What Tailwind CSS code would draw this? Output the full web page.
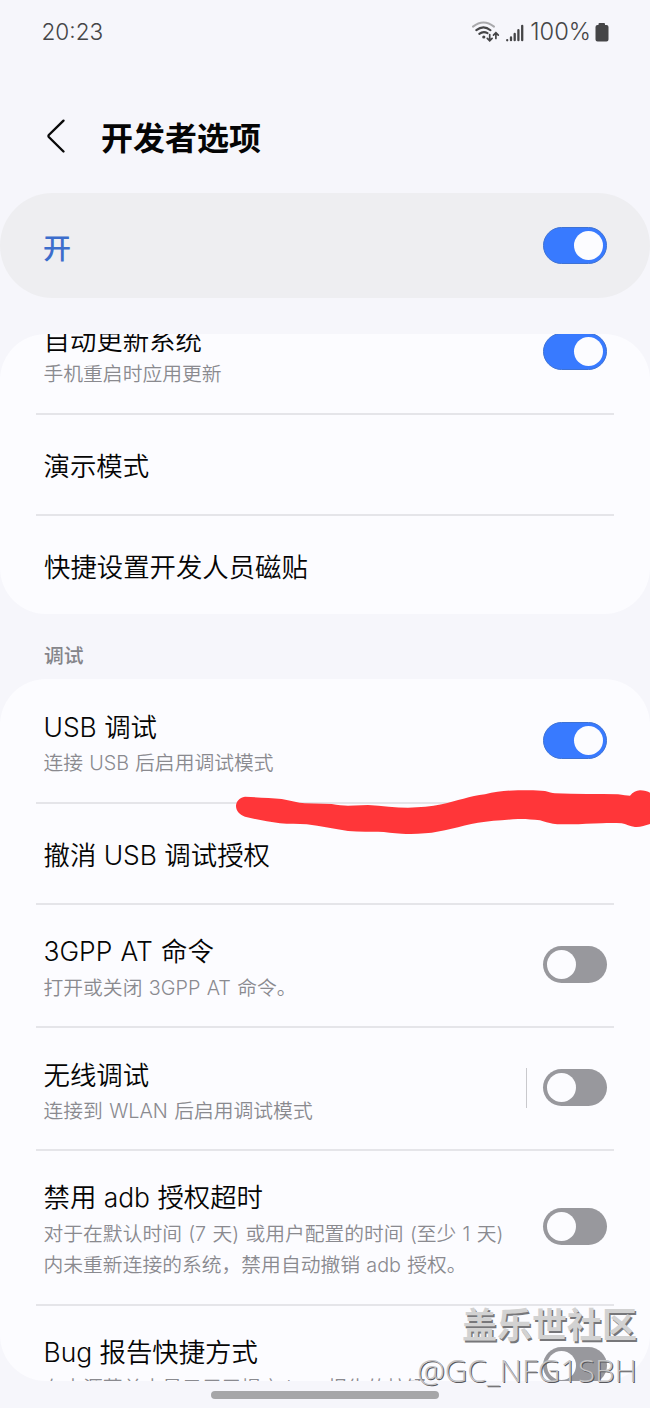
<!DOCTYPE html>
<html lang="zh-CN">
<head>
<meta charset="utf-8">
<title>开发者选项</title>
<script src="https://cdn.jsdelivr.net/npm/@tailwindcss/browser@4"></script>
</head>
<body class="bg-[#f6f6fb]">
<div class="relative flex h-[1408px] w-[650px] flex-col overflow-hidden bg-[#f6f6fb] font-['Inter','Noto_Sans_CJK_SC',sans-serif] text-[26.4px] font-[360] leading-[36px] text-[#050505]">

  <!-- status bar -->
  <header class="flex h-16 shrink-0 items-center justify-between pl-[41.500px] pr-[41px] text-[#454547]">
    <span class="font-['Inter'] text-[22.6px] font-[350]">20:23</span>
    <div class="flex items-center">
      <svg class="h-[24px] w-[60px]" viewBox="0 0 60 24" fill="none" stroke="#454547" stroke-linecap="round">
        <path d="M3 6.6Q13.500 -1.500 24 6.600" stroke="#a9a9ac" stroke-width="2"/>
        <path d="M6.300 10.200Q13.500 4.600 20.500 10.200" stroke-width="2.100"/>
        <path d="M9.300 13.900Q13.300 10.800 17.500 13.200" stroke-width="2.100"/>
        <circle cx="13.800" cy="17" r="1.600" fill="#454547" stroke="none"/>
        <path d="M19.700 14.500V20.500M17.300 18.400L19.700 20.800L22.100 18.400M25.900 18.500V12.800M23.500 15.100L25.900 12.700L28.300 15.100" stroke-width="1.700"/>
        <path d="M37.200 20.200V20.300M41 17.500V20.200M44.700 14V20.200M48.400 10.200V20.200M52.200 5.800V20.200" stroke-width="2.300"/>
      </svg>
      <span class="font-['Inter'] text-[23.700px] font-light">100%</span>
      <svg class="ml-[4px] h-[19px] w-[14px]" viewBox="0 0 14 19"><path d="M4.500 0h4.500a1 1 0 0 1 1 1v1h1.500a2 2 0 0 1 2 2v12.500a2 2 0 0 1-2 2h-9a2 2 0 0 1-2-2V4a2 2 0 0 1 2-2h1V1a1 1 0 0 1 1-1z" fill="#454547"/></svg>
    </div>
  </header>

  <!-- page title -->
  <div class="flex h-[129px] shrink-0 items-center pl-[46px] pt-[18px]">
    <svg class="mb-[4px] h-[36px] w-[22px]" viewBox="0 0 22 36" fill="none" stroke="#0a0a0a" stroke-width="2.400" stroke-linecap="round" stroke-linejoin="round"><path d="M17.500 2.700L2.800 17Q2 18 2.800 19L17.500 33.500"/></svg>
    <h1 class="ml-[33px] pt-[2px] text-[32px] font-semibold leading-[48px]">开发者选项</h1>
  </div>

  <!-- master switch -->
  <section class="flex h-[105px] shrink-0 items-center justify-between rounded-full bg-[#eeeef1] pl-[43px] pr-[43px]">
    <span class="pt-[6px] text-[28px] font-medium text-[#3c6dcc]">开</span>
    <div class="flex h-[37px] w-[64px] items-center justify-end rounded-full border border-[#3e72d4] bg-[#387aff] pr-[3px]"><div class="size-[29px] rounded-full bg-[#fcfcff]"></div></div>
  </section>

  <!-- system card -->
  <section class="mt-[36px] flex h-[280px] shrink-0 flex-col overflow-hidden rounded-[46px] bg-[#fcfcff]">
    <div class="flex h-[79px] shrink-0 justify-between pl-[43.500px] pr-[43px]">
      <div class="-mt-[12px]">
        <p>自动更新系统</p>
        <p class="mt-px text-[19.8px] font-[350] leading-[31px] text-[#8a8a8f]">手机重启时应用更新</p>
      </div>
      <div class="-mt-px flex h-[37px] w-[64px] items-center justify-end rounded-full border border-[#3e72d4] bg-[#387aff] pr-[3px]"><div class="size-[29px] rounded-full bg-[#fcfcff]"></div></div>
    </div>
    <div class="mx-[36px] h-[2px] shrink-0 bg-[#e5e5e9]"></div>
    <div class="flex h-[99px] shrink-0 items-center pl-[43.500px] pt-[3px]">演示模式</div>
    <div class="mx-[36px] h-[2px] shrink-0 bg-[#e5e5e9]"></div>
    <div class="flex h-[98px] shrink-0 items-center pl-[44px] pt-[4px]">快捷设置开发人员磁贴</div>
  </section>

  <h2 class="flex h-[65px] shrink-0 items-center pl-[44px] pt-[18px] text-[19.8px] font-medium text-[#85858a]">调试</h2>

  <!-- debugging card -->
  <section class="flex h-[702px] shrink-0 flex-col overflow-hidden rounded-[46px] bg-[#fcfcff]">
    <div class="flex h-[123px] shrink-0 items-start justify-between pl-[43.500px] pr-[43px]">
      <div class="pt-[30px]">
        <p>USB 调试</p>
        <p class="mt-[3px] text-[19.8px] font-[350] leading-[31px] text-[#8a8a8f] [word-spacing:0.5px]">连接 USB 后启用调试模式</p>
      </div>
      <div class="mt-[43px] flex h-[37px] w-[64px] items-center justify-end rounded-full border border-[#3e72d4] bg-[#387aff] pr-[3px]"><div class="size-[29px] rounded-full bg-[#fcfcff]"></div></div>
    </div>
    <div class="mx-[36px] h-[2px] shrink-0 bg-[#e5e5e9]"></div>
    <div class="flex h-[99px] shrink-0 items-center pl-[43.500px] pt-[2px]">撤消 USB 调试授权</div>
    <div class="mx-[36px] h-[2px] shrink-0 bg-[#e5e5e9]"></div>
    <div class="flex h-[121px] shrink-0 items-start justify-between pl-[43.500px] pr-[43px]">
      <div class="pt-[28px]">
        <p class="[word-spacing:0.8px]">3GPP AT 命令</p>
        <p class="mt-[4px] text-[19.8px] font-[350] leading-[31px] text-[#8a8a8f] [word-spacing:0.8px]">打开或关闭 3GPP AT 命令。</p>
      </div>
      <div class="mt-[41px] flex h-[37px] w-[64px] items-center rounded-full bg-[#98989d] pl-[4px]"><div class="size-[29px] rounded-full bg-[#fcfcff]"></div></div>
    </div>
    <div class="mx-[36px] h-[2px] shrink-0 bg-[#e5e5e9]"></div>
    <div class="flex h-[121px] shrink-0 items-start pl-[43.500px] pr-[43px]">
      <div class="flex-1 pt-[29px]">
        <p>无线调试</p>
        <p class="mt-[3px] text-[19.8px] font-[350] leading-[31px] text-[#8a8a8f] [word-spacing:0.8px]">连接到 WLAN 后启用调试模式</p>
      </div>
      <div class="mr-[16px] mt-[40px] h-[40px] w-px bg-[#c9c9cd]"></div>
      <div class="mt-[41px] flex h-[37px] w-[64px] items-center rounded-full bg-[#98989d] pl-[4px]"><div class="size-[29px] rounded-full bg-[#fcfcff]"></div></div>
    </div>
    <div class="mx-[36px] h-[2px] shrink-0 bg-[#e5e5e9]"></div>
    <div class="flex h-[153px] shrink-0 items-start justify-between pl-[43.500px] pr-[43px]">
      <div class="pt-[28px]">
        <p>禁用 adb 授权超时</p>
        <p class="mt-[4px] whitespace-nowrap text-[19.8px] font-[350] leading-[31px] text-[#8a8a8f] [word-spacing:0.7px]">对于在默认时间 (7 天) 或用户配置的时间 (至少 1 天)<br>内未重新连接的系统，禁用自动撤销 adb 授权。</p>
      </div>
      <div class="mt-[57px] flex h-[37px] w-[64px] items-center rounded-full bg-[#98989d] pl-[4px]"><div class="size-[29px] rounded-full bg-[#fcfcff]"></div></div>
    </div>
    <div class="mx-[36px] h-[2px] shrink-0 bg-[#e5e5e9]"></div>
    <div class="flex h-[75px] shrink-0 items-start justify-between overflow-hidden pl-[43.500px] pr-[43px]">
      <div class="pt-[28px]">
        <p>Bug 报告快捷方式</p>
        <p class="mt-[3px] whitespace-nowrap text-[19.8px] font-[350] leading-[31px] text-[#8a8a8f]">在电源菜单中显示用于提交 bug 报告的按钮</p>
      </div>
      <div class="mt-[41px] flex h-[37px] w-[64px] items-center rounded-full bg-[#98989d] pl-[4px]"><div class="size-[29px] rounded-full bg-[#fcfcff]"></div></div>
    </div>
  </section>

  <!-- gesture bar -->
  <div class="ml-[211px] mt-[10px] h-[8px] w-[228px] shrink-0 rounded-full bg-[#a6a6a8]"></div>

  <!-- marker stroke -->
  <svg class="absolute left-0 top-[780px] h-[64px] w-[650px]" viewBox="0 780 650 64">
    <path fill="#ff3639" d="M245 796.700C258 797.500 271 798 281.700 799C290 800.500 298 803 305 803.300L331.700 804C338 805 343 805.500 348 805.700L368 805C382 806 396 807.700 408 807.700C420 807.500 431 806.500 441.700 804.300C457 801 470 796 485 794.300C496 791.500 507 790.500 518 790.300C528 790 538 790 545 791C549 792 552 793.300 555 793.300C576 794 598 794 618 794.300C623 795 627 795.700 630 795.700C633 792 636 790.500 640 790.300C644 790.500 648 791.500 650 792.700V824C645 825.500 640 827.500 635 827C630 826.500 626 824 621.700 823.300C615 823 608 823 601.700 823.300C590 823.500 579 824.500 568 824.300C562 824.300 557 824.500 553 823.700C549 823 544 821.500 540 820.300C532 819.500 525 818.700 518 819C505 820 490 821 478 822.700C460 826 443 832 425 833.300C417 834 409 834 401.700 833.700C393 833.300 386 831.800 378 831.700C368 831.500 358 832 348 831C334 829 321 826 306.700 824.300C298 824 289 824 280 823.300C268 822 256 819.500 245 816.700C233 812.500 233 799 245 796.700Z"/>
  </svg>

  <!-- watermark -->
  <div class="absolute right-[13px] top-[1301px] flex flex-col items-end whitespace-nowrap text-[#d2d2d2]">
    <span class="font-['Noto_Sans_CJK_SC'] text-[35px] font-bold leading-[44px] [text-shadow:1.5px_1.5px_0_#77777a]">盖乐世社区</span>
    <span class="font-['Open_Sans'] text-[31.200px] font-light leading-[50px] text-[#c4c4c6] [text-shadow:1px_1px_0_#58585c]">@GC_NFG1SBH</span>
  </div>
</div>
</body>
</html>
